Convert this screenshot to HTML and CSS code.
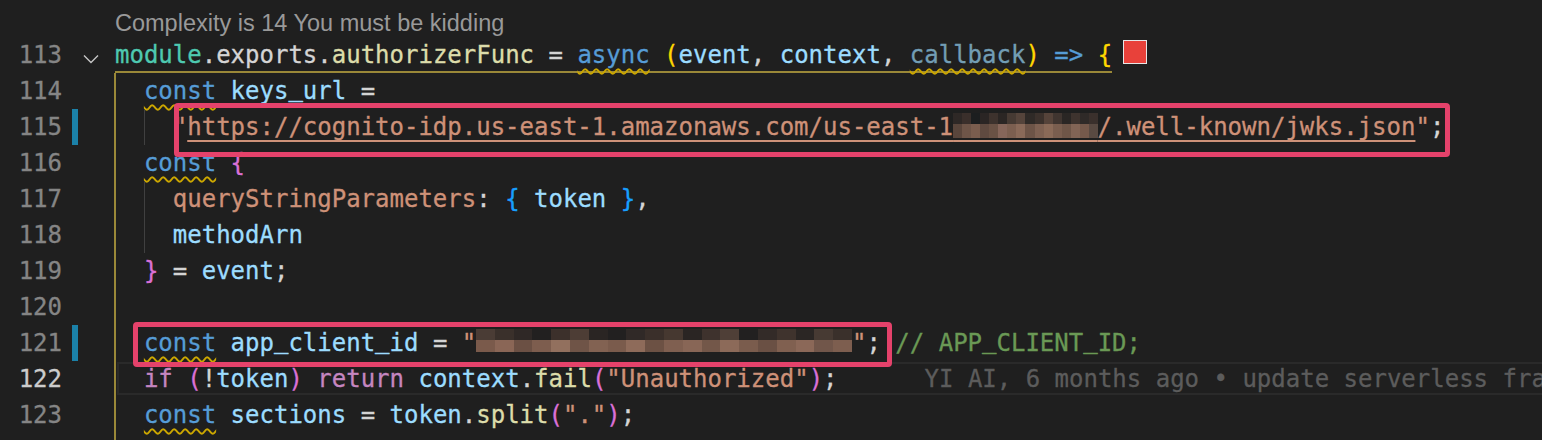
FILE: index.html
```html
<!DOCTYPE html>
<html lang="en">

<head>
    <meta charset="UTF-8">
    <meta name="viewport" content="width=device-width, initial-scale=1.0">
    <title>authorizer.js</title>
    <link rel="stylesheet" href="styles.css">
</head>

<body>
    <div class="editor">
        <div class="row lens-row">
            <div class="gutter"></div>
            <div class="lens">Complexity is 14 You must be kidding</div>
        </div>

        <div class="row">
            <div class="gutter"><span class="num">113</span><span class="mark"></span><span class="fold"><svg width="16" height="10" viewBox="0 0 16 10"><path d="M1 1.5l7 7 7-7" fill="none" stroke="#c5c5c5" stroke-width="1.4"/></svg></span></div>
            <div class="code"><span class="head"><span class="mod">module</span>.exports.<span class="fn">authorizerFunc</span> = <span class="kw warn">async</span> <span class="b1">(</span><span class="var">event</span>, <span class="var">context</span>, <span class="unused warn">callback</span><span class="b1">)</span> <span class="kw">=&gt;</span> <span class="b1">{</span></span><span class="swatch"></span></div>
        </div>

        <div class="row">
            <div class="gutter"><span class="num">114</span><span class="mark"></span></div>
            <div class="code"><span class="ind act"></span><span class="kw warn">const</span> <span class="var">keys<span class="u">_</span>url</span> =</div>
        </div>

        <div class="row">
            <div class="gutter"><span class="num">115</span><span class="mark changed"></span></div>
            <div class="code"><span class="ind act"></span><span class="ind guide"></span><span class="str">"<span class="link">https://cognito-idp.us-east-1.amazonaws.com/us-east-1<span class="blur blur-a">_xxxxxxxxx</span>/.well-known/jwks.json</span>"</span>;<span class="hl hl-url"></span></div>
        </div>

        <div class="row">
            <div class="gutter"><span class="num">116</span><span class="mark"></span></div>
            <div class="code"><span class="ind act"></span><span class="kw warn">const</span> <span class="b2">{</span></div>
        </div>

        <div class="row">
            <div class="gutter"><span class="num">117</span><span class="mark"></span></div>
            <div class="code"><span class="ind act"></span><span class="ind guide"></span><span class="prop">queryStringParameters</span>: <span class="b3">{</span> <span class="var">token</span> <span class="b3">}</span>,</div>
        </div>

        <div class="row">
            <div class="gutter"><span class="num">118</span><span class="mark"></span></div>
            <div class="code"><span class="ind act"></span><span class="ind guide"></span><span class="var">methodArn</span></div>
        </div>

        <div class="row">
            <div class="gutter"><span class="num">119</span><span class="mark"></span></div>
            <div class="code"><span class="ind act"></span><span class="b2">}</span> = <span class="var">event</span>;</div>
        </div>

        <div class="row">
            <div class="gutter"><span class="num">120</span><span class="mark"></span></div>
            <div class="code"><span class="ind act"></span></div>
        </div>

        <div class="row">
            <div class="gutter"><span class="num">121</span><span class="mark changed"></span></div>
            <div class="code"><span class="ind act"></span><span class="kw warn">const</span> <span class="var">app<span class="u">_</span>client<span class="u">_</span>id</span> = <span class="str">"<span class="blur blur-b">xxxxxxxxxxxxxxxxxxxxxxxxxx</span>"</span>; <span class="cmt">// APP<span class="u">_</span>CLIENT<span class="u">_</span>ID;</span><span class="hl hl-id"></span></div>
        </div>

        <div class="row current">
            <div class="gutter"><span class="num">122</span><span class="mark"></span></div>
            <div class="code"><span class="ind act"></span><span class="ctl">if</span> <span class="b2">(</span>!<span class="var">token</span><span class="b2">)</span> <span class="ctl">return</span> <span class="var">context</span>.<span class="fn">fail</span><span class="b2">(</span><span class="str">"Unauthorized"</span><span class="b2">)</span>;<span class="blame">YI AI, 6 months ago • update serverless fra</span></div>
        </div>

        <div class="row">
            <div class="gutter"><span class="num">123</span><span class="mark"></span></div>
            <div class="code"><span class="ind act"></span><span class="kw warn">const</span> <span class="var">sections</span> = <span class="var">token</span>.<span class="fn">split</span><span class="b2">(</span><span class="str">"."</span><span class="b2">)</span>;</div>
        </div>

        <div class="row">
            <div class="gutter"></div>
            <div class="code"><span class="ind act"></span></div>
        </div>
    </div>
</body>

</html>
```

FILE: styles.css
```css
body {
    margin: 0;
    background-color: #1f1f1f;
    overflow: hidden;
    font-family: "DejaVu Sans Mono", monospace;
    font-size: 24px;
    color: #d4d4d4;
}

.editor {
    width: 1542px;
    height: 440px;
    overflow: hidden;
}

.row {
    display: flex;
    height: 36px;
    line-height: 36px;
}

.lens-row {
    height: 37px;
}

.gutter {
    display: flex;
    flex: none;
    width: 115px;
}

.num {
    width: 62px;
    text-align: right;
    color: #858585;
    -webkit-text-stroke: 0.3px currentColor;
}

.current .num {
    color: #cccccc;
}

.mark {
    width: 6px;
    height: 36px;
    margin-left: 10px;
}

.mark.changed {
    background-color: #1b81a8;
}

.fold {
    display: flex;
    align-items: flex-start;
    padding-top: 17px;
    margin-left: 5px;
}

.lens {
    font-family: "Liberation Sans", Arial, sans-serif;
    font-size: 23.5px;
    line-height: 26px;
    padding-top: 10px;
    color: #999999;
    white-space: pre;
}

.code {
    flex: 1;
    position: relative;
    white-space: pre;
    -webkit-text-stroke: 0.3px currentColor;
}

.current .code::before {
    content: '';
    position: absolute;
    top: 1px;
    bottom: 2px;
    left: 2px;
    right: 0;
    border: 2px solid #2a2a2a;
}

.head {
    display: inline-block;
    height: 36px;
    vertical-align: top;
    box-shadow: inset 0 -2px 0 #9a8838;
}

.swatch {
    display: inline-block;
    width: 22px;
    height: 22px;
    margin: 3px 0 0 11px;
    vertical-align: top;
    background-color: #e8413a;
    border: 1px solid #e6e6e6;
}

.ind {
    display: inline-block;
    width: 2ch;
    height: 36px;
    vertical-align: top;
}

.ind.act {
    box-shadow: inset 2px 0 0 #9a8838;
    margin-left: -1px;
    padding-left: 1px;
}

.ind.guide {
    box-shadow: inset 1px 0 0 #404040;
}

.u {
    position: relative;
    top: -3px;
}

/* tokens */
.kw {
    color: #569cd6;
}

.ctl {
    color: #c586c0;
}

.var {
    color: #9cdcfe;
}

.unused {
    color: #729db4;
}

.fn {
    color: #dcdcaa;
}

.mod {
    color: #4ec9b0;
}

.str,
.prop {
    color: #ce9178;
}

.cmt {
    color: #6a9955;
}

.b1 {
    color: #ffd700;
}

.b2 {
    color: #da70d6;
}

.b3 {
    color: #179fff;
}

.warn {
    text-decoration: underline wavy #cca700;
    text-decoration-thickness: 1.5px;
    text-underline-offset: 5px;
    text-decoration-skip-ink: none;
}

.link {
    text-decoration: underline;
    text-decoration-thickness: 2px;
    text-underline-offset: 5px;
    text-decoration-skip-ink: none;
}

.blame {
    margin-left: 87px;
    color: #5c5c5c;
}

/* pixelated secrets */
.blur {
    color: transparent;
    background-repeat: no-repeat;
}

.blur-a {
    background-image:
        linear-gradient(90deg, #2e2826 0 6.25%, #3a2f2b 6.25% 12.5%, #1c1e1f 12.5% 18.75%, #2a2524 18.75% 25%, #3d322d 25% 31.25%, #2b2624 31.25% 37.5%, #463a33 37.5% 43.75%, #55443b 43.75% 50%, #2f2a27 50% 56.25%, #3b312c 56.25% 62.5%, #55433a 62.5% 68.75%, #403530 68.75% 75%, #2a2624 75% 81.25%, #3e332e 81.25% 87.5%, #2f2a28 87.5% 93.75%, #3a302c 93.75% 100%),
        linear-gradient(90deg, #5a463c 0 6.25%, #6e5548 6.25% 12.5%, #7a5d4e 12.5% 18.75%, #5f4a40 18.75% 25%, #6a5245 25% 31.25%, #86665a 31.25% 37.5%, #7c5f50 37.5% 43.75%, #8a6a59 43.75% 50%, #6d5447 50% 56.25%, #7e6152 56.25% 62.5%, #8a6a58 62.5% 68.75%, #7a5e4f 68.75% 75%, #6f5648 75% 81.25%, #826455 81.25% 87.5%, #75594b 87.5% 93.75%, #594a42 93.75% 100%);
    background-size: 100% 13px, 100% 14px;
    background-position: 0 -2px, 0 11px;
}

.blur-b {
    background-image:
        linear-gradient(90deg, #4a3c35 0 5%, #3a302b 5% 10%, #2f2826 10% 15%, #222020 15% 20%, #3c302b 20% 25%, #4d3d35 25% 30%, #2a2523 30% 35%, #222020 35% 40%, #302927 40% 45%, #3a2f2a 45% 50%, #463830 50% 55%, #2a2523 55% 60%, #3e322d 60% 65%, #4f3f37 65% 70%, #222020 70% 75%, #332b28 75% 80%, #3f332d 80% 85%, #2b2624 85% 90%, #473a33 90% 95%, #3a302b 95% 100%),
        linear-gradient(90deg, #7a5a4b 0 5%, #8a6656 5% 10%, #6b5044 10% 15%, #7d5d4e 15% 20%, #92705e 20% 25%, #6f5447 25% 30%, #826252 30% 35%, #7a5b4c 35% 40%, #8e6b5a 40% 45%, #6c5144 45% 50%, #7f5f50 50% 55%, #886656 55% 60%, #735749 60% 65%, #8c6a59 65% 70%, #7a5c4d 70% 75%, #6a5044 75% 80%, #806050 80% 85%, #8b6858 85% 90%, #71564a 90% 95%, #7d5e4f 95% 100%);
    background-size: 100% 11px, 100% 12px;
    background-position: 0 0, 0 11px;
}

/* annotation boxes */
.hl {
    position: absolute;
    z-index: 2;
    box-sizing: border-box;
    border: 5px solid #e5426b;
    border-radius: 4px;
}

.hl-url {
    left: 59px;
    top: -6px;
    width: 1276px;
    height: 54px;
}

.hl-id {
    left: 18px;
    top: -3px;
    width: 759px;
    height: 45px;
}
```
